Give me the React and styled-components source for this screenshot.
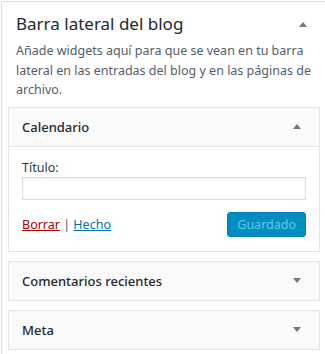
import React from "react";
import styled, { createGlobalStyle } from "styled-components";

const GlobalStyle = createGlobalStyle`
  body {
    margin: 0;
    background: #fff;
    font-family: "Noto Sans", "Open Sans", sans-serif;
  }
`;

const Panel = styled.div`
  margin: 1px 0 0 1px;
  border-top: 1px solid #ddd;
  border-left: 1px solid #ddd;
  background: #fff;
  height: 360px;
`;

const SectionHead = styled.div`
  display: flex;
  align-items: center;
  justify-content: space-between;
  padding: 11px 18px 0 14px;
`;

const SectionTitle = styled.h3`
  margin: 0;
  font-size: 17px;
  font-weight: 400;
  color: #23282d;
  line-height: 22px;
`;

const Arrow = styled.span`
  width: 0;
  height: 0;
  border-left: 4px solid transparent;
  border-right: 4px solid transparent;
  ${(p) =>
    p.$down
      ? "border-top: 5px solid #72777c;"
      : "border-bottom: 5px solid #72777c;"}
`;

const Description = styled.p`
  margin: 6px 14px 7px 14px;
  font-size: 12.5px;
  line-height: 19.5px;
  color: #555d66;
`;

const WidgetList = styled.div`
  display: flex;
  flex-direction: column;
  gap: 9px;
  padding: 0 5px 0 6px;
`;

const Widget = styled.div`
  border: 1px solid #e5e5e5;
  background: #fff;
`;

const WidgetTop = styled.div`
  display: flex;
  align-items: center;
  justify-content: space-between;
  height: 38px;
  padding: 0 18px 0 13px;
  background: #fafafa;
  ${(p) => p.$open && "border-bottom: 1px solid #e5e5e5;"}
`;

const WidgetTitle = styled.span`
  font-size: 13px;
  font-weight: 500;
  color: #23282d;
`;

const WidgetBody = styled.div`
  padding: 13px 13px 14px 13px;
`;

const Label = styled.label`
  display: block;
  font-size: 12.5px;
  color: #32373c;
  line-height: 16px;
`;

const Input = styled.input`
  display: block;
  box-sizing: border-box;
  width: 100%;
  height: 23px;
  margin: 1px 0 0 0;
  border: 1px solid #ddd;
  box-shadow: inset 0 1px 2px rgba(0, 0, 0, 0.07);
  outline: none;
`;

const Actions = styled.div`
  display: flex;
  align-items: center;
  justify-content: space-between;
  margin-top: 12px;
`;

const Links = styled.div`
  font-size: 12.5px;
  color: #555;
`;

const Link = styled.a`
  color: ${(p) => (p.$danger ? "#a00" : "#0073aa")};
  text-decoration: underline;
`;

const Button = styled.button`
  height: 25px;
  padding: 0 9px;
  border: 1px solid #0083b8;
  border-radius: 3px;
  background: #008ec2;
  color: #66c6e4;
  font-family: inherit;
  font-size: 12.5px;
`;

function App() {
  return (
    <>
      <GlobalStyle />
      <Panel>
        <SectionHead>
          <SectionTitle>Barra lateral del blog</SectionTitle>
          <Arrow />
        </SectionHead>
        <Description>
          Añade widgets aquí para que se vean en tu barra lateral en las
          entradas del blog y en las páginas de archivo.
        </Description>
        <WidgetList>
          <Widget>
            <WidgetTop $open>
              <WidgetTitle>Calendario</WidgetTitle>
              <Arrow />
            </WidgetTop>
            <WidgetBody>
              <Label>Título:</Label>
              <Input type="text" />
              <Actions>
                <Links>
                  <Link $danger href="#">Borrar</Link> | <Link href="#">Hecho</Link>
                </Links>
                <Button>Guardado</Button>
              </Actions>
            </WidgetBody>
          </Widget>
          <Widget>
            <WidgetTop>
              <WidgetTitle>Comentarios recientes</WidgetTitle>
              <Arrow $down />
            </WidgetTop>
          </Widget>
          <Widget>
            <WidgetTop>
              <WidgetTitle>Meta</WidgetTitle>
              <Arrow $down />
            </WidgetTop>
          </Widget>
        </WidgetList>
      </Panel>
    </>
  );
}

export default App;
